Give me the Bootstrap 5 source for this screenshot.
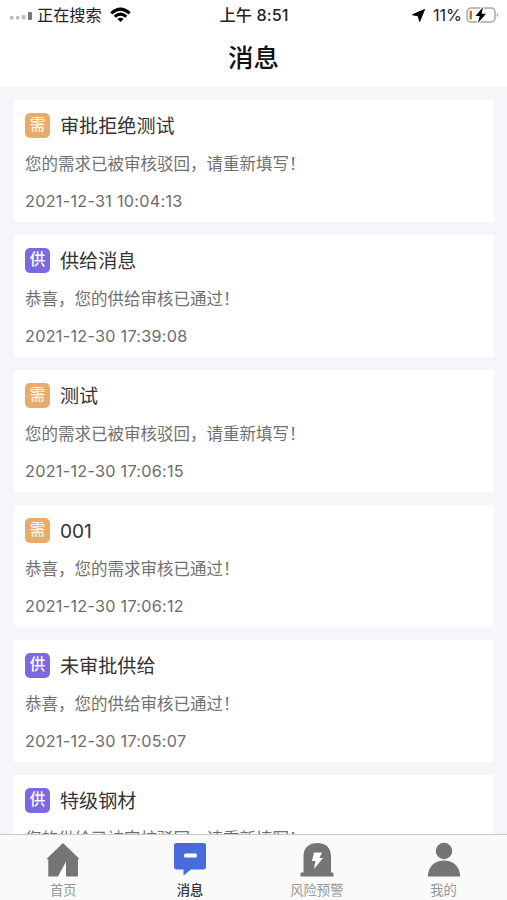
<!DOCTYPE html>
<html lang="zh-CN">
<head>
<meta charset="utf-8">
<meta name="viewport" content="width=device-width, initial-scale=1">
<title>消息</title>
<link href="https://cdn.jsdelivr.net/npm/bootstrap@5.3.0/dist/css/bootstrap.min.css" rel="stylesheet">
<style>
body{font-family:Inter,"Noto Sans CJK SC",sans-serif;background:#f4f6fa;color:#333;white-space:nowrap}
svg{display:block;flex:none}
.statusbar{height:30px;font-size:16.2px;line-height:30px;color:#222;padding:0 8px 0 9px}
.statusbar .side{flex:1 1 0}
.clock{font-weight:500;letter-spacing:.1px}
.page-title{height:57px;line-height:56px;font-size:25.5px;font-weight:500;color:#111}
.msgs{padding:13px 13px 0 14px;gap:13px}
.msg{height:122px;padding:6px 11px 2px;border-radius:2px;flex:none;line-height:38px}
.tag{width:25px;height:25px;border-radius:5px;font-size:15.5px;line-height:23px;font-weight:500;margin-right:10px}
.need{background:#e6ac6c;color:#fff3df}
.supply{background:#7c68e2}
.msg-title{font-size:19.1px;color:#333;height:38px;line-height:40px}
.msg-text{font-size:16.5px;color:#707070;height:38px;line-height:40px}
.msg-time{font-size:16.2px;color:#6c6c6c;height:38px;letter-spacing:.28px}
.tabs{height:66px;background:#fafafa;border-top:1px solid #c9cacc}
.tab-item{flex:1 1 0;font-size:13.3px;line-height:20px;color:#989898;padding-top:7px}
.tab-item svg{margin-bottom:3px}
.tab-item.current{color:#333;font-weight:500}
</style>
<script src="https://cdn.jsdelivr.net/npm/bootstrap@5.3.0/dist/js/bootstrap.bundle.min.js"></script>
</head>
<body class="vh-100 d-flex flex-column overflow-hidden">
<header class="bg-white">
  <div class="statusbar d-flex align-items-center">
    <div class="side d-flex align-items-center">
      <svg width="24" height="12" viewBox="0 0 24 12"><g fill="#bbb"><rect x="1" y="7" width="3.5" height="3.5" rx="1"/><rect x="7" y="7" width="3.5" height="3.5" rx="1"/><rect x="13" y="6" width="3.5" height="4.5" rx="1"/></g><rect x="19" y="3" width="4" height="8" rx="1" fill="#777"/></svg>
      <span class="ms-1 me-2">正在搜索</span>
      <svg width="21" height="16" viewBox="0 0 21 16" fill="none" stroke="#000" stroke-width="3"><path d="M1.3 6.3Q10.5-2 19.7 6.3M4.7 9.7Q10.5 4.6 16.3 9.7"/><path d="M7.3 12.1Q10.5 9.6 13.7 12.1L10.5 15Z" fill="#000" stroke="none"/></svg>
    </div>
    <div class="clock">上午 8:51</div>
    <div class="side d-flex align-items-center justify-content-end">
      <svg class="me-2" width="13" height="13" viewBox="0 0 13 13"><path d="M12.5.5 7.7 12.5 6.2 6.8.5 5.8Z" fill="#000" stroke="#000" stroke-linejoin="round"/></svg>
      <span class="me-1">11%</span>
      <svg width="33" height="18" viewBox="0 0 33 18"><rect x="1" y="2" width="28" height="14" rx="4" fill="#fff" stroke="#aaa69f" stroke-width="1.5"/><rect x="3.5" y="4.5" width="2.5" height="9" rx="1" fill="#b97626"/><path d="M30.8 7v4q1.5-.5 1.5-2t-1.5-2" fill="#aaa"/><path d="M17 1 9.500 10h4.200L12 17 20 7.700h-4.300Z" fill="#000" stroke="#fff" stroke-width="2.500" paint-order="stroke"/></svg>
    </div>
  </div>
  <h1 class="page-title text-center m-0">消息</h1>
</header>
<main class="msgs flex-grow-1 d-flex flex-column overflow-hidden">
  <article class="msg bg-white"><div class="d-flex align-items-center"><span class="tag need text-center">需</span><span class="msg-title">审批拒绝测试</span></div><div class="msg-text">您的需求已被审核驳回，请重新填写！</div><div class="msg-time">2021-12-31 10:04:13</div></article>
  <article class="msg bg-white"><div class="d-flex align-items-center"><span class="tag supply text-white text-center">供</span><span class="msg-title">供给消息</span></div><div class="msg-text">恭喜，您的供给审核已通过！</div><div class="msg-time">2021-12-30 17:39:08</div></article>
  <article class="msg bg-white"><div class="d-flex align-items-center"><span class="tag need text-center">需</span><span class="msg-title">测试</span></div><div class="msg-text">您的需求已被审核驳回，请重新填写！</div><div class="msg-time">2021-12-30 17:06:15</div></article>
  <article class="msg bg-white"><div class="d-flex align-items-center"><span class="tag need text-center">需</span><span class="msg-title">001</span></div><div class="msg-text">恭喜，您的需求审核已通过！</div><div class="msg-time">2021-12-30 17:06:12</div></article>
  <article class="msg bg-white"><div class="d-flex align-items-center"><span class="tag supply text-white text-center">供</span><span class="msg-title">未审批供给</span></div><div class="msg-text">恭喜，您的供给审核已通过！</div><div class="msg-time">2021-12-30 17:05:07</div></article>
  <article class="msg bg-white"><div class="d-flex align-items-center"><span class="tag supply text-white text-center">供</span><span class="msg-title">特级钢材</span></div><div class="msg-text">您的供给已被审核驳回，请重新填写！</div></article>
</main>
<nav class="tabs d-flex flex-shrink-0">
  <div class="tab-item d-flex flex-column align-items-center">
    <svg width="34" height="35" viewBox="0 0 34 35"><path d="M17 1 1 16.500q-.500 1 1.300 1V34.500H12l8-15v15h12V17.500q2 0 1-1Z" fill="#757575"/></svg>首页</div>
  <div class="tab-item current d-flex flex-column align-items-center">
    <svg width="34" height="35" viewBox="0 0 34 35"><path d="M3.500 1h27Q33 1 33 3.500v21Q33 27.500 30.500 27.500H18L10.500 33.500V27.500H3.500Q1 27.500 1 24.500V3.500Q1 1 3.500 1Z" fill="#486cdd"/><rect x="11" y="11.500" width="13" height="4" rx="1.500" fill="#fff"/></svg>消息</div>
  <div class="tab-item d-flex flex-column align-items-center">
    <svg width="34" height="35" viewBox="0 0 34 35"><path d="M3.500 30.500V14.500C3.500 5.500 9 1 17.500 1S31 6 31 14.500V30.500h1.500q1 0 1 1v3H.5v-3q0-1 1-1Z" fill="#757575"/><path d="M14 10.500h8L19.500 16H23L14 27l1.500-8H12Z" fill="#fff"/></svg>风险预警</div>
  <div class="tab-item d-flex flex-column align-items-center">
    <svg width="34" height="35" viewBox="0 0 34 35" fill="#757575"><circle cx="17" cy="9" r="8.200"/><path d="M.7 34.500C1.500 24 8 18.500 17 18.500S32.500 24 33.300 34.500Z"/></svg>我的</div>
</nav>
</body>
</html>
